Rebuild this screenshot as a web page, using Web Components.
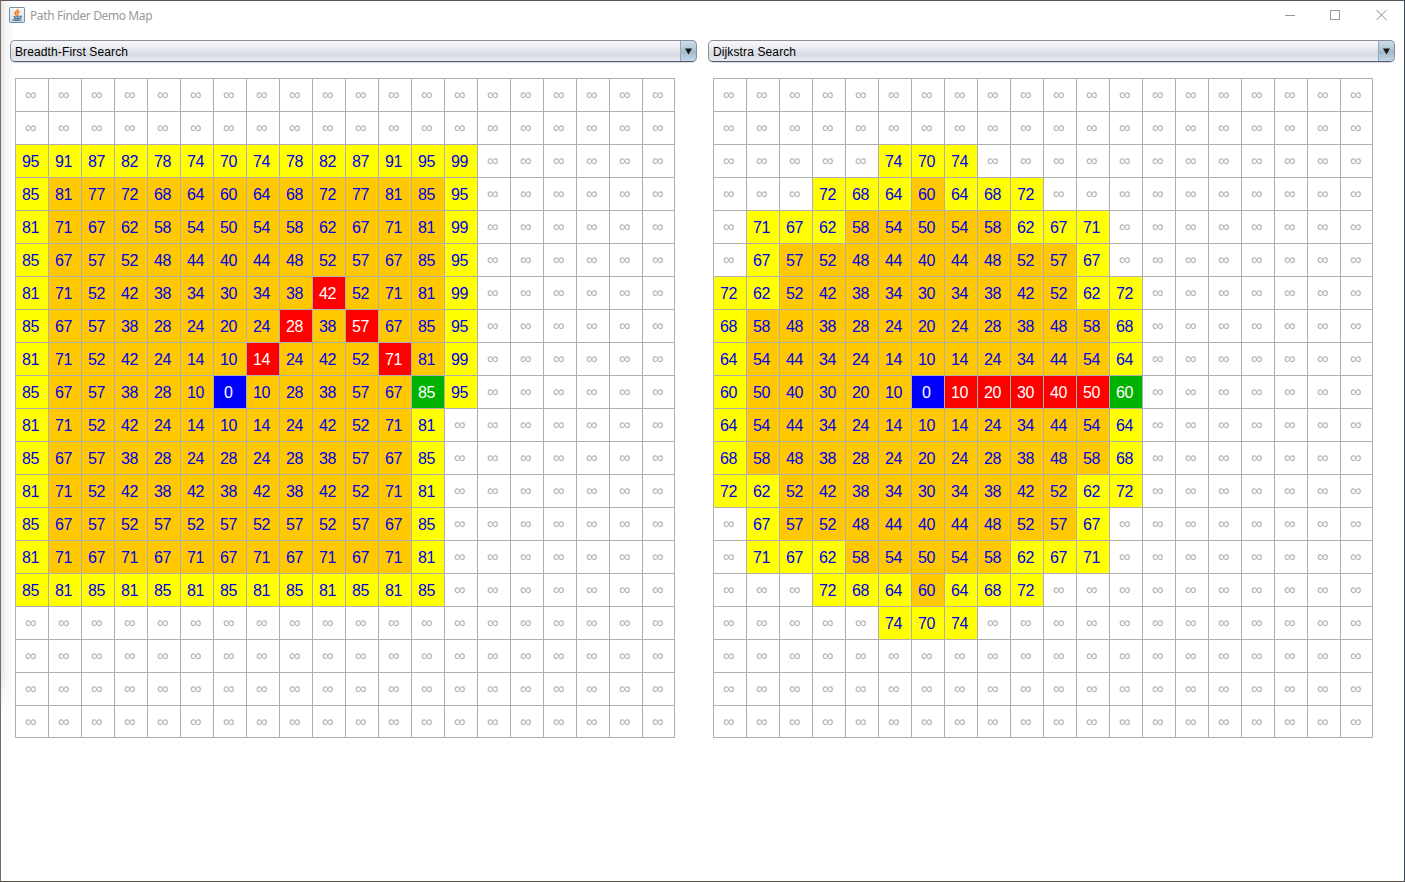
<!DOCTYPE html>
<html lang="en"><head><meta charset="utf-8"><title>Path Finder Demo Map</title>
<style>html,body{margin:0;height:100%;overflow:hidden;background:#fff}</style></head>
<body>
<app-window caption="Path Finder Demo Map">
<search-panel label="Breadth-First Search" map="bfs"></search-panel>
<search-panel label="Dijkstra Search" map="dijkstra"></search-panel>
</app-window>
<script>
// Each row: first column, distances, first and last settled (orange) column
const D = {
bfs:{rows:[null,null,
[0,'95 91 87 82 78 74 70 74 78 82 87 91 95 99',1,0],
[0,'85 81 77 72 68 64 60 64 68 72 77 81 85 95',1,12],
[0,'81 71 67 62 58 54 50 54 58 62 67 71 81 99',1,12],
[0,'85 67 57 52 48 44 40 44 48 52 57 67 85 95',1,12],
[0,'81 71 52 42 38 34 30 34 38 42 52 71 81 99',1,12],
[0,'85 67 57 38 28 24 20 24 28 38 57 67 85 95',1,12],
[0,'81 71 52 42 24 14 10 14 24 42 52 71 81 99',1,12],
[0,'85 67 57 38 28 10 0 10 28 38 57 67 85 95',1,12],
[0,'81 71 52 42 24 14 10 14 24 42 52 71 81',1,11],
[0,'85 67 57 38 28 24 28 24 28 38 57 67 85',1,11],
[0,'81 71 52 42 38 42 38 42 38 42 52 71 81',1,11],
[0,'85 67 57 52 57 52 57 52 57 52 57 67 85',1,11],
[0,'81 71 67 71 67 71 67 71 67 71 67 71 81',1,11],
[0,'85 81 85 81 85 81 85 81 85 81 85 81 85',1,0],
null,null,null,null],
path:['6,9','7,8','7,10','8,7','8,11'],start:'9,6',goal:'9,12'},
dijkstra:{rows:[null,null,
[5,'74 70 74',1,0],
[3,'72 68 64 60 64 68 72',6,6],
[1,'71 67 62 58 54 50 54 58 62 67 71',4,8],
[1,'67 57 52 48 44 40 44 48 52 57 67',2,10],
[0,'72 62 52 42 38 34 30 34 38 42 52 62 72',2,10],
[0,'68 58 48 38 28 24 20 24 28 38 48 58 68',1,11],
[0,'64 54 44 34 24 14 10 14 24 34 44 54 64',1,11],
[0,'60 50 40 30 20 10 0 10 20 30 40 50 60',1,11]],
path:['9,7','9,8','9,9','9,10','9,11'],start:'9,6',goal:'9,12'}};
const R = D.dijkstra.rows;
for (let i = 8; i >= 0; i--) R.push(R[i]);
R.push(null);

const shadow = (el, html) => { el.attachShadow({mode:'open'}).innerHTML = html; };

customElements.define('java-icon', class extends HTMLElement {
connectedCallback(){ shadow(this, `<style>:host{display:block;width:16px;height:16px;margin-top:-1px}svg{display:block}</style>
<svg width="16" height="16" viewBox="0 0 16 16" fill="none"><defs><linearGradient id="a" x2="0" y2="1"><stop stop-color="#f3f5f7"/><stop offset=".6" stop-color="#e4eaf0"/><stop offset="1" stop-color="#c3d2df"/></linearGradient></defs>
<rect x=".5" y=".5" width="15" height="15" rx=".8" fill="url(#a)" stroke="#7591a8"/><path d="M1.500 1.500h13" stroke="#fff" opacity=".8"/>
<path d="M9 2C9.500 4 5.800 4.500 6 6.300 6.200 7.300 7.300 7.600 7.200 8.800M10.700 4.500C8.500 5.200 7.700 6 8.600 7 9.200 7.800 8.600 8.400 8.100 8.900" stroke="#ea7a1a" stroke-width="1.500"/>
<path d="M4.500 9.500c1 .6 5 .6 6 0M10.800 9.200c2.200-.4 2 1.500-.2 2M5 11.400c1.300.5 4 .5 5.300 0M3.500 12.800c1.800 1 7.200.9 8.800-.2" stroke="#47708f" stroke-width="1.200"/></svg>`); }});

customElements.define('title-bar', class extends HTMLElement {
connectedCallback(){ shadow(this, `<style>:host{display:flex;align-items:center;height:29px;padding:0 16px 0 8px;color:#999;font:12px/16px "Noto Sans","Open Sans",sans-serif}
.t{margin-left:5px;flex:1;letter-spacing:-.39px;padding-top:1px}svg{display:block}.w{margin-top:-1px}</style>
<java-icon></java-icon><span class="t"><slot></slot></span>
<svg class="w" width="104" height="12" viewBox="0 0 104 12" fill="none" stroke="#999" shape-rendering="crispEdges"><path d="M1 6.500h10M46.500 1.500h9v9h-9z"/><path d="M92.500 1l10 10M102.500 1l-10 10" shape-rendering="auto" stroke="#8a8a8a"/></svg>`); }});

customElements.define('combo-box', class extends HTMLElement {
connectedCallback(){ shadow(this, `<style>:host{display:flex;box-sizing:border-box;height:22px;border:1px solid #8b8f9b;border-bottom-color:#565c6c;border-radius:5px;overflow:hidden;background:linear-gradient(#f8f8fb 0,#e9ebef 35%,#d7dae2 68%,#e8ecf4 100%);font:12px/21px "Liberation Sans",Arial,sans-serif;color:#000;box-shadow:0 1px 0 #d7dae2}
span{flex:1;padding-left:4px;line-height:22px;letter-spacing:.12px}
.b{width:15px;margin:-1px -1px -1px 0;border:1px solid #55718b;border-left-color:#93a8ba;border-radius:0 5px 5px 0;background:linear-gradient(#d0dfea 0,#afc5d6 42%,#a1b9cc 55%,#c4daeb 100%)}
svg{display:block;margin:7px 0 0 4px}</style>
<span><slot></slot></span><div class="b"><svg width="7" height="7"><path d="M0 .5h7L3.500 6.500z" fill="#181818"/></svg></div>`); }});

customElements.define('distance-map', class extends HTMLElement {
connectedCallback(){
const m = D[this.getAttribute('name')];
let h = '';
for (let r = 0; r < 20; r++) for (let c = 0; c < 20; c++) {
const row = m.rows[r], v = row && row[1].split(' ')[c - row[0]], k = r + ',' + c;
const cls = !v ? 'u' : k === m.start ? 's' : k === m.goal ? 'g' : m.path.includes(k) ? 'p' : c >= row[2] && c <= row[3] ? 'o' : 'y';
h += `<i class="${cls}">${v || '∞'}</i>`;
}
shadow(this, `<style>:host{display:grid;width:658px;height:658px;grid-template-columns:repeat(19,32px) 31px;grid-template-rows:repeat(19,32px) 31px;gap:1px;border:1px solid #afafaf;background:#afafaf;font:16px/33px "Liberation Sans",Arial,sans-serif}
i{display:block;box-sizing:border-box;font-style:normal;overflow:hidden;padding-left:6px;color:#0000e6;letter-spacing:-.5px}
.u{background:#fff;color:#afafaf;line-height:31px;padding-left:9px;letter-spacing:0}.y{background:#ff0}.o{background:#ffc800}
.p{background:#f00;color:#fff}.s{background:#00f;color:#fff;padding-left:10px}.g{background:#00b200;color:#fff}</style>${h}`); }});

customElements.define('search-panel', class extends HTMLElement {
connectedCallback(){ shadow(this, `<style>:host{display:block;width:687px}distance-map{margin:16px 0 0 5px}</style>
<combo-box>${this.getAttribute('label')}</combo-box><distance-map name="${this.getAttribute('map')}"></distance-map>`); }});

customElements.define('app-window', class extends HTMLElement {
connectedCallback(){ shadow(this, `<style>:host{display:block;box-sizing:border-box;width:1405px;height:882px;border:1px solid;border-color:#57545a #3c4650 #5b5750 #776b65;
background:linear-gradient(transparent 670px,#fff 716px) 0 0/13px 100% no-repeat,linear-gradient(90deg,#e6e4e4,#f5f4f4 5px,#fff 13px) 0 0/13px 100% no-repeat,#fff}
main{display:flex;gap:11px;padding:10px 9px}</style>
<title-bar>${this.getAttribute('caption')}</title-bar><main><slot></slot></main>`); }});
</script>
</body></html>
